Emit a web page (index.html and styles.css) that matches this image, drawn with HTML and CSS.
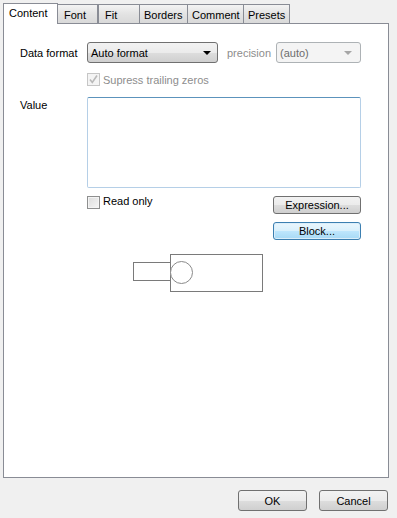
FILE: index.html
```html
<!DOCTYPE html>
<html lang="en">
<head>
  <meta charset="UTF-8">
  <title>Cell properties</title>
  <link rel="stylesheet" href="styles.css">
</head>
<body>
  <div class="tabs">
    <div class="tab active tab-content">Content</div>
    <div class="tab tab-font">Font</div>
    <div class="tab tab-fit">Fit</div>
    <div class="tab tab-borders">Borders</div>
    <div class="tab tab-comment">Comment</div>
    <div class="tab tab-presets">Presets</div>
  </div>

  <div class="panel">
    <div class="row row-format">
      <span class="label">Data format</span>
      <div class="combo combo-format">
        <span>Auto format</span>
        <span class="arrow"></span>
      </div>
      <span class="label-precision">precision</span>
      <div class="combo combo-precision disabled">
        <span>(auto)</span>
        <span class="arrow"></span>
      </div>
    </div>

    <div class="row row-zeros">
      <span class="check checked disabled">
        <svg width="11" height="11" viewBox="0 0 11 11"><path d="M2 5.5 L4.3 8.5 L9 1.5" fill="none" stroke="#b9b9b9" stroke-width="1.6"/></svg>
      </span>
      <span class="check-text disabled-text">Supress trailing zeros</span>
    </div>

    <div class="row row-value">
      <span class="label">Value</span>
      <div class="textbox"></div>
    </div>

    <div class="row row-readonly">
      <span class="check"></span>
      <span class="check-text">Read only</span>
      <div class="btn btn-side">Expression...</div>
    </div>

    <div class="row row-block">
      <div class="btn btn-side btn-focus">Block...</div>
    </div>

    <div class="diagram">
      <svg width="131" height="39" viewBox="0 0 131 39">
        <rect x="0.5" y="8.5" width="38" height="18" fill="#fff" stroke="#7a7a7a"/>
        <rect x="37.5" y="0.5" width="92" height="37" fill="#fff" stroke="#7a7a7a"/>
        <circle cx="48.5" cy="18.5" r="11" fill="#fff" stroke="#8a8a8a"/>
      </svg>
    </div>
  </div>

  <div class="footer">
    <div class="btn btn-dialog">OK</div>
    <div class="btn btn-dialog">Cancel</div>
  </div>
</body>
</html>
```

FILE: styles.css
```css
* {
  box-sizing: border-box;
}

body {
  margin: 0;
  background: #f0f0f0;
  font-family: 'Liberation Sans', Arial, sans-serif;
  font-size: 11px;
  color: #000;
  width: 397px;
  height: 518px;
  overflow: hidden;
}

/* Tab strip */
.tabs {
  display: flex;
  align-items: flex-end;
  padding: 3px 0 0 3px;
  height: 24px;
  margin-bottom: -1px;
}

.tab {
  position: relative;
  height: 19px;
  margin-bottom: 1px;
  padding: 4px 0 0 6px;
  border: 1px solid #898c95;
  border-bottom: none;
  margin-left: -1px;
  background: linear-gradient(#f3f3f3, #e3e3e3 50%, #d9d9d9);
  white-space: nowrap;
}

.tab.active {
  z-index: 1;
  height: 21px;
  margin-bottom: 0;
  margin-left: 0;
  padding-top: 3px;
  padding-left: 5px;
  background: #fff;
}

.tab-content { width: 55px; }
.tab-font { width: 41px; }
.tab-fit { width: 42px; margin-left: 0; }
.tab-borders { width: 49px; padding-left: 4px; }
.tab-comment { width: 57px; padding-left: 4px; }
.tab-presets { width: 47px; padding-left: 4px; }

/* Page */
.panel {
  margin-left: 3px;
  width: 386px;
  height: 455px;
  background: #fff;
  border: 1px solid #898c95;
  padding-top: 18px;
}

.row {
  display: flex;
  align-items: center;
}

.label {
  width: 67px;
}

.row-format {
  padding-left: 16px;
  height: 21px;
}

.combo {
  display: flex;
  align-items: center;
  justify-content: space-between;
  height: 21px;
  padding: 0 6px 0 3px;
  border: 1px solid #707070;
  border-radius: 3px;
  background: linear-gradient(#f2f2f2, #ebebeb 50%, #dddddd 51%, #cfcfcf);
}

.combo-format {
  width: 131px;
}

.combo .arrow {
  width: 0;
  height: 0;
  border-left: 4px solid transparent;
  border-right: 4px solid transparent;
  border-top: 4px solid #000;
}

.label-precision {
  margin-left: 9px;
  width: 49px;
  color: #8d8d8d;
}

.combo-precision {
  width: 85px;
  border-color: #adb2b5;
  background: #f4f4f4;
  color: #6d6d6d;
}

.combo-precision .arrow {
  border-top-color: #a6a6a6;
  margin-right: 2px;
}

.row-zeros {
  margin-top: 10px;
  padding-left: 83px;
}

.check {
  display: inline-flex;
  align-items: center;
  justify-content: center;
  width: 13px;
  height: 13px;
  border: 1px solid #8e8f8f;
  background: linear-gradient(135deg, #dcdcdc, #f6f6f6);
  box-shadow: inset 0 0 0 1px #f4f4f4;
}

.check.disabled {
  border-color: #c6c6c6;
  background: #f4f4f4;
  box-shadow: none;
}

.check-text {
  margin-left: 3px;
}

.disabled-text {
  color: #8d8d8d;
}

.row-value {
  margin-top: 11px;
  padding-left: 16px;
  align-items: flex-start;
}

.row-value .label {
  padding-top: 2px;
}

.textbox {
  width: 274px;
  height: 91px;
  border: 1px solid #b5cfe7;
  border-top-color: #5c93bc;
  border-radius: 2px;
  background: #fff;
}

.row-readonly {
  margin-top: 8px;
  padding-left: 83px;
  align-items: flex-start;
}

.row-readonly .check-text {
  margin-top: -1px;
  flex: 1;
}

.btn {
  display: flex;
  align-items: center;
  justify-content: center;
  border: 1px solid #707070;
  border-radius: 3px;
  background: linear-gradient(#f2f2f2, #ebebeb 50%, #dddddd 51%, #cfcfcf);
}

.btn-side {
  width: 88px;
  height: 18px;
  margin-right: 27px;
}

.row-block {
  margin-top: 8px;
  justify-content: flex-end;
}

.btn-focus {
  border-color: #3c7fb1;
  background: linear-gradient(#eaf6fd, #d9f0fc 50%, #bee6fd 51%, #a7d9f5);
  box-shadow: inset 0 0 0 1px #dbeefa;
}

.diagram {
  margin-top: 14px;
  padding-left: 129px;
  height: 39px;
}

.diagram svg {
  display: block;
}

/* Dialog buttons */
.footer {
  display: flex;
  justify-content: flex-end;
  gap: 12px;
  margin-top: 12px;
  padding-right: 9px;
}

.btn-dialog {
  width: 69px;
  height: 21px;
}
```
